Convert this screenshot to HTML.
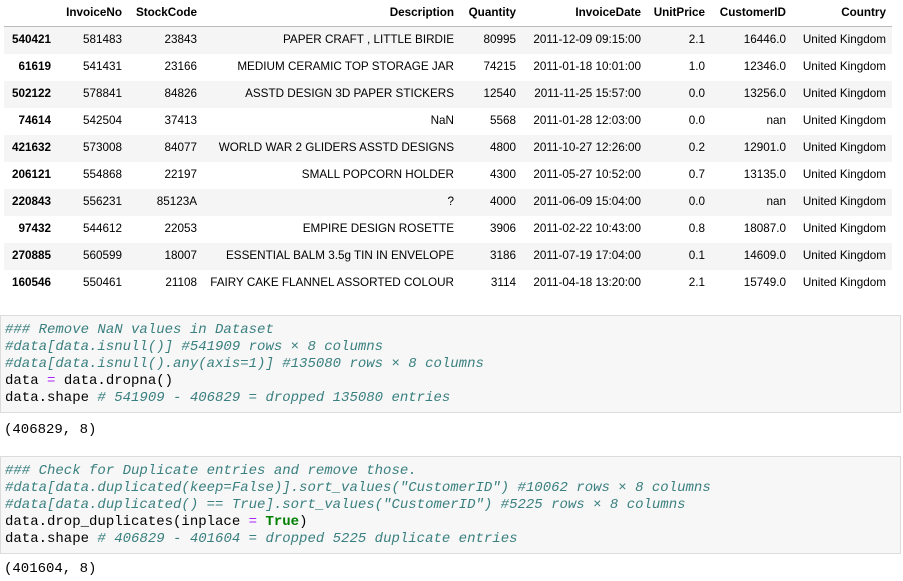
<!DOCTYPE html>
<html><head><meta charset="utf-8"><style>
body{margin:0;width:903px;height:581px;background:#fff;position:relative;overflow:hidden;font-family:"Liberation Sans",Arial,sans-serif;font-size:11.7px;color:#000}
.r{position:absolute;left:4px;width:888px;height:27px}
.r.s{background:#f5f5f5}
.r span{position:absolute;top:6px;white-space:nowrap;transform:translateX(-100%)}
.h span{font-weight:bold}
.r b{position:absolute;top:6px;transform:translateX(-100%);white-space:nowrap}
.code{position:absolute;left:0;width:901px;background:#f7f7f7;border:1px solid #dcdcdc;font-family:"Liberation Mono",monospace;font-size:14px;line-height:17px;padding:6px 0 6px 4px;box-sizing:border-box;white-space:pre}
.c{color:#3b8080;font-style:italic}
.o{color:#aa22ff}
.k{color:#008000;font-weight:bold}
.out{position:absolute;left:4px;font-family:"Liberation Mono",monospace;font-size:14px;white-space:pre}
</style></head><body>
<div class="r h" style="top:0;border-bottom:1px solid #bbb;height:26px">
<span style="left:118px">InvoiceNo</span><span style="left:193px">StockCode</span><span style="left:450px">Description</span><span style="left:512px">Quantity</span><span style="left:637px">InvoiceDate</span><span style="left:701px">UnitPrice</span><span style="left:782px">CustomerID</span><span style="left:882px">Country</span></div>
<div class="r s" style="top:27px"><b style="left:47px">540421</b><span style="left:118px">581483</span><span style="left:193px">23843</span><span style="left:450px">PAPER CRAFT , LITTLE BIRDIE</span><span style="left:512px">80995</span><span style="left:637px">2011-12-09 09:15:00</span><span style="left:701px">2.1</span><span style="left:782px">16446.0</span><span style="left:882px">United Kingdom</span></div>
<div class="r" style="top:54px"><b style="left:47px">61619</b><span style="left:118px">541431</span><span style="left:193px">23166</span><span style="left:450px">MEDIUM CERAMIC TOP STORAGE JAR</span><span style="left:512px">74215</span><span style="left:637px">2011-01-18 10:01:00</span><span style="left:701px">1.0</span><span style="left:782px">12346.0</span><span style="left:882px">United Kingdom</span></div>
<div class="r s" style="top:81px"><b style="left:47px">502122</b><span style="left:118px">578841</span><span style="left:193px">84826</span><span style="left:450px">ASSTD DESIGN 3D PAPER STICKERS</span><span style="left:512px">12540</span><span style="left:637px">2011-11-25 15:57:00</span><span style="left:701px">0.0</span><span style="left:782px">13256.0</span><span style="left:882px">United Kingdom</span></div>
<div class="r" style="top:108px"><b style="left:47px">74614</b><span style="left:118px">542504</span><span style="left:193px">37413</span><span style="left:450px">NaN</span><span style="left:512px">5568</span><span style="left:637px">2011-01-28 12:03:00</span><span style="left:701px">0.0</span><span style="left:782px">nan</span><span style="left:882px">United Kingdom</span></div>
<div class="r s" style="top:135px"><b style="left:47px">421632</b><span style="left:118px">573008</span><span style="left:193px">84077</span><span style="left:450px">WORLD WAR 2 GLIDERS ASSTD DESIGNS</span><span style="left:512px">4800</span><span style="left:637px">2011-10-27 12:26:00</span><span style="left:701px">0.2</span><span style="left:782px">12901.0</span><span style="left:882px">United Kingdom</span></div>
<div class="r" style="top:162px"><b style="left:47px">206121</b><span style="left:118px">554868</span><span style="left:193px">22197</span><span style="left:450px">SMALL POPCORN HOLDER</span><span style="left:512px">4300</span><span style="left:637px">2011-05-27 10:52:00</span><span style="left:701px">0.7</span><span style="left:782px">13135.0</span><span style="left:882px">United Kingdom</span></div>
<div class="r s" style="top:189px"><b style="left:47px">220843</b><span style="left:118px">556231</span><span style="left:193px">85123A</span><span style="left:450px">?</span><span style="left:512px">4000</span><span style="left:637px">2011-06-09 15:04:00</span><span style="left:701px">0.0</span><span style="left:782px">nan</span><span style="left:882px">United Kingdom</span></div>
<div class="r" style="top:216px"><b style="left:47px">97432</b><span style="left:118px">544612</span><span style="left:193px">22053</span><span style="left:450px">EMPIRE DESIGN ROSETTE</span><span style="left:512px">3906</span><span style="left:637px">2011-02-22 10:43:00</span><span style="left:701px">0.8</span><span style="left:782px">18087.0</span><span style="left:882px">United Kingdom</span></div>
<div class="r s" style="top:243px"><b style="left:47px">270885</b><span style="left:118px">560599</span><span style="left:193px">18007</span><span style="left:450px">ESSENTIAL BALM 3.5g TIN IN ENVELOPE</span><span style="left:512px">3186</span><span style="left:637px">2011-07-19 17:04:00</span><span style="left:701px">0.1</span><span style="left:782px">14609.0</span><span style="left:882px">United Kingdom</span></div>
<div class="r" style="top:270px"><b style="left:47px">160546</b><span style="left:118px">550461</span><span style="left:193px">21108</span><span style="left:450px">FAIRY CAKE FLANNEL ASSORTED COLOUR</span><span style="left:512px">3114</span><span style="left:637px">2011-04-18 13:20:00</span><span style="left:701px">2.1</span><span style="left:782px">15749.0</span><span style="left:882px">United Kingdom</span></div>

<div class="code" style="top:315px;height:98px"><span class="c">### Remove NaN values in Dataset</span>
<span class="c">#data[data.isnull()] #541909 rows × 8 columns</span>
<span class="c">#data[data.isnull().any(axis=1)] #135080 rows × 8 columns</span>
data <span class="o">=</span> data.dropna()
data.shape <span class="c"># 541909 - 406829 = dropped 135080 entries</span></div>
<div class="out" style="top:422px">(406829, 8)</div>

<div class="code" style="top:456px;height:98px"><span class="c">### Check for Duplicate entries and remove those.</span>
<span class="c">#data[data.duplicated(keep=False)].sort_values("CustomerID") #10062 rows × 8 columns</span>
<span class="c">#data[data.duplicated() == True].sort_values("CustomerID") #5225 rows × 8 columns</span>
data.drop_duplicates(inplace <span class="o">=</span> <span class="k">True</span>)
data.shape <span class="c"># 406829 - 401604 = dropped 5225 duplicate entries</span></div>
<div class="out" style="top:561px">(401604, 8)</div>
</body></html>
